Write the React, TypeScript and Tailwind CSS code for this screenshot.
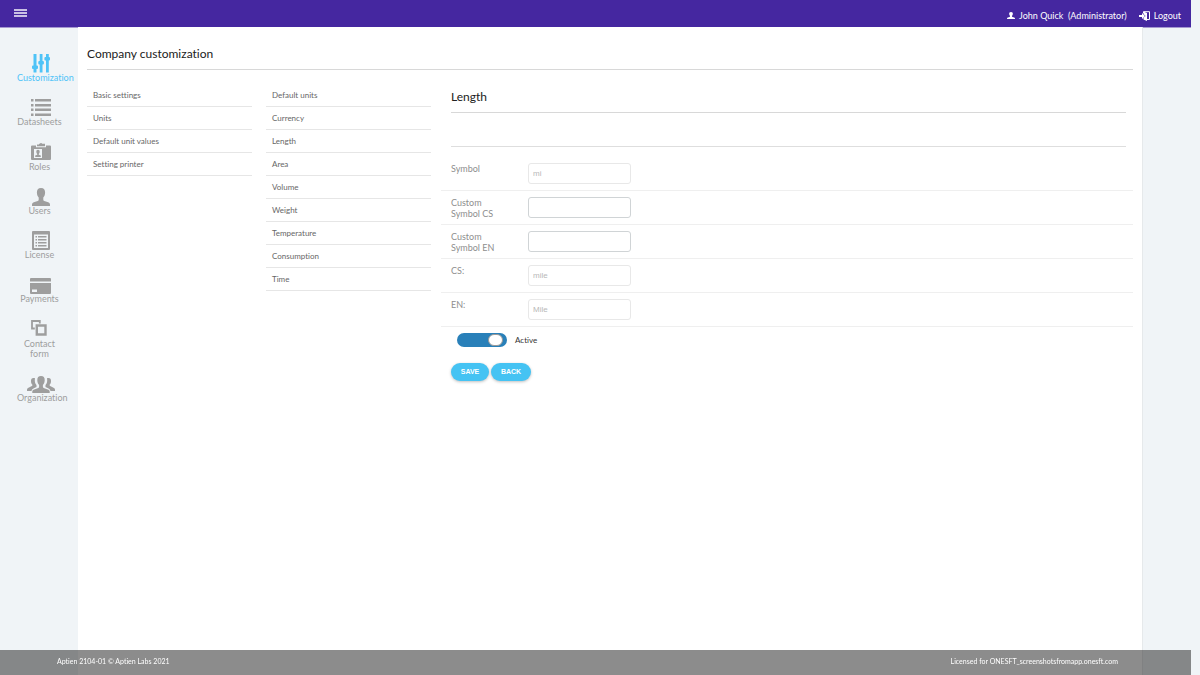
import { FC, ReactNode } from "react";

interface MenuItem {
  label: string;
  icon: ReactNode;
  active?: boolean;
}

interface Field {
  id: string;
  label: string;
  value?: string;
  disabled?: boolean;
}

const UserShape: FC<{ className?: string }> = ({ className }) => (
  <svg className={className} viewBox="0 0 18 18" preserveAspectRatio="none" fill="currentColor">
    <path d="M9 0C6 0 4.900 1.800 4.900 4.500c0 2.200.7 3.900 1.800 4.900v2c0 .8-.3 1.200-1 1.500L1.800 14.200C.5 14.700 0 15.500 0 16.700V18h18v-1.300c0-1.200-.5-2-1.800-2.500l-3.900-1.300c-.7-.3-1-.7-1-1.500v-2c1.100-1 1.800-2.700 1.800-4.900C13.100 1.800 12 0 9 0z" />
  </svg>
);

const menuItems: MenuItem[] = [
  {
    label: "Customization",
    active: true,
    icon: (
      <svg className="ml-[2px] h-[20px] w-[18px]" viewBox="0 0 18 20" fill="currentColor">
        <path d="M1.500 1h3v18.500h-3zM7.700 1h2.800v18.500H7.700zM14 1h2.800v18.500H14z" />
        <path d="M0 13.500q0-1 1-1h4q1 0 1 1v1.600q0 1-1 1H1q-1 0-1-1zM6.300 9q0-1 1-1h3.600q1 0 1 1v1.400q0 1-1 1H7.300q-1 0-1-1zM12.400 5q0-1 1-1H17q1 0 1 1v1.400q0 1-1 1h-3.600q-1 0-1-1z" />
      </svg>
    ),
  },
  {
    label: "Datasheets",
    icon: (
      <svg className="ml-[2px] h-[20px] w-[20px]" viewBox="0 0 20 20" fill="currentColor">
        <path d="M0 2h2.500v2.500H0zM0 7h2.500v2.500H0zM0 11.500h2.500V14H0zM0 16.500h2.500V19H0zM4 2h16v2.500H4zM4 7h16v2.500H4zM4 11.500h16V14H4zM4 16.500h16V19H4z" />
      </svg>
    ),
  },
  {
    label: "Roles",
    icon: (
      <svg className="ml-[2px] h-[20px] w-[20px]" viewBox="0 0 20 20" fill="currentColor">
        <path
          fillRule="evenodd"
          d="M8 2.500V1.800h.8a1.300 1.300 0 0 1 2.400 0H14v2.400H6V2.500zM1 3.500h4v1.700h10V3.500h4a1 1 0 0 1 1 1V17a1 1 0 0 1-1 1H1a1 1 0 0 1-1-1V4.500a1 1 0 0 1 1-1zM3 7v9h8V7z"
        />
        <path d="M7 7.700c-1.300 0-1.700.8-1.700 2 0 1 .4 1.700.9 2.200v.8l-2 .9V15h5.600v-1.400l-2-.9v-.8c.5-.5.9-1.200.9-2.200 0-1.200-.4-2-1.700-2z" />
      </svg>
    ),
  },
  {
    label: "Users",
    icon: <UserShape className="mt-[2px] ml-[2px] h-[18px] w-[18px]" />,
  },
  {
    label: "License",
    icon: (
      <svg className="ml-[2px] h-[20px] w-[18px]" viewBox="0 0 18 20" fill="currentColor">
        <path
          fillRule="evenodd"
          d="M1 1h16a1 1 0 0 1 1 1v17a1 1 0 0 1-1 1H1a1 1 0 0 1-1-1V2a1 1 0 0 1 1-1zM2 4.500V18h14V4.500z"
        />
        <path d="M3.500 6H5v1.500H3.500zM3.500 9H5v1.500H3.500zM3.500 12H5v1.500H3.500zM3.500 15H5v1.500H3.500zM6 6h8.500v1.500H6zM6 9h8.500v1.500H6zM6 12h8.500v1.500H6zM6 15h8.500v1.500H6z" />
      </svg>
    ),
  },
  {
    label: "Payments",
    icon: (
      <svg className="mt-[2px] ml-[2px] h-[20px] w-[21px]" viewBox="0 0 21 20" fill="currentColor">
        <path
          fillRule="evenodd"
          d="M1 3h19a1 1 0 0 1 1 1v2.500H0V4a1 1 0 0 1 1-1zM0 8h21v10a1 1 0 0 1-1 1H1a1 1 0 0 1-1-1zM2 14.500V17h5v-2.500z"
        />
      </svg>
    ),
  },
  {
    label: "Contact form",
    icon: (
      <svg className="mr-[2px] mb-[2px] h-[16px] w-[16px]" viewBox="0 0 16 16" fill="none" stroke="currentColor">
        <path d="M3.800 8.500H1V1h7.800v2.500" strokeWidth="1.800" />
        <path d="M5.800 5.500h8.700v9H5.800z" strokeWidth="2.400" />
      </svg>
    ),
  },
  {
    label: "Organization",
    icon: (
      <svg className="mt-[2px] ml-[2px] h-[20px] w-[28px]" viewBox="0 0 28 20" fill="currentColor">
        <path d="M6.500 4C4.700 4 4 5.200 4 7c0 1.600.5 2.900 1.300 3.600v1.200L1 14c-.7.400-1 .9-1 1.700V17h4.500c.3-1.500 1.200-2.200 2.400-2.700l2.600-1.200V11C8.300 9.800 7.800 8.200 7.800 6.200c0-.7.100-1.300.2-1.900C7.600 4.100 7.100 4 6.500 4zM21.500 4c1.800 0 2.500 1.200 2.500 3 0 1.600-.5 2.900-1.300 3.600v1.200L27 14c.7.400 1 .9 1 1.700V17h-4.500c-.3-1.500-1.200-2.200-2.400-2.700l-2.600-1.200V11c1.200-1.200 1.700-2.800 1.700-4.800 0-.7-.1-1.300-.2-1.900.4-.2.900-.3 1.500-.3z" />
        <path d="M14 2c-2.600 0-3.700 1.600-3.700 4 0 2.200.7 4 1.800 5v1.700c0 .7-.3 1-.8 1.200l-4.700 1.800c-.8.400-1.300 1-1.300 2V19h17.400v-1.300c0-1-.5-1.600-1.300-2l-4.700-1.800c-.5-.2-.8-.5-.8-1.200V11c1.100-1 1.800-2.800 1.800-5 0-2.400-1.100-4-3.700-4z" />
      </svg>
    ),
  },
];

const settings = ["Basic settings", "Units", "Default unit values", "Setting printer"];

const units = [
  "Default units",
  "Currency",
  "Length",
  "Area",
  "Volume",
  "Weight",
  "Temperature",
  "Consumption",
  "Time",
];

const fields: Field[] = [
  { id: "symbol", label: "Symbol", value: "mi", disabled: true },
  { id: "symbol-cs", label: "Custom Symbol CS" },
  { id: "symbol-en", label: "Custom Symbol EN" },
  { id: "name-cs", label: "CS:", value: "mile", disabled: true },
  { id: "name-en", label: "EN:", value: "Mile", disabled: true },
];

const Header = () => (
  <header className="mr-[9px] flex h-[27px] items-center justify-between bg-[#4527a0] pr-[10px] pl-[14px] text-white shadow-[0_1px_0_#a597d0]">
    <button type="button" aria-label="Menu" className="mb-[2px]">
      <svg className="h-[8px] w-[13px]" viewBox="0 0 13 8" shapeRendering="crispEdges">
        <path d="M0 0h13v2H0zM0 3h13v2H0zM0 6h13v2H0z" fill="#c9c0e4" />
      </svg>
    </button>
    <div className="mt-1 flex items-center gap-3 text-[9px] leading-3">
      <a href="#profile" className="flex items-center gap-1">
        <UserShape className="h-[7px] w-[8px]" />
        <span className="whitespace-pre">John Quick  (Administrator)</span>
      </a>
      <a href="#logout" className="flex items-center gap-1">
        <svg className="h-[10px] w-[11px]" viewBox="0 0 11 10">
          <path d="M0 4h3V2l3 3-3 3V6H0z" fill="#fff" />
          <path d="M4.500 2V.7h6v7.800H8" fill="none" stroke="#fff" />
          <path d="M4.500.5L8 2v8L4.500 8.500V6.800L6.600 5 4.500 3z" fill="#fff" />
        </svg>
        Logout
      </a>
    </div>
  </header>
);

const Sidebar = () => (
  <nav className="w-[78px] shrink-0 pt-[26px] pl-[17px]">
    <ul className="flex h-[350px] flex-col justify-between">
      {menuItems.map(({ label, icon, active }) => (
        <li key={label}>
          <a
            href="#"
            className={`block w-[45px] text-center text-[9px] leading-[10px] ${
              active ? "text-[#4fc3f7]" : "text-[#9e9e9e]"
            }`}
          >
            <span className="flex h-[20px] items-center justify-center">{icon}</span>
            {label}
          </a>
        </li>
      ))}
    </ul>
  </nav>
);

const LinkList: FC<{ items: string[] }> = ({ items }) => (
  <ul className="w-[165px] shrink-0">
    {items.map((item) => (
      <li key={item} className="border-b border-[#e6e6e6]">
        <a href="#" className="block px-[6px] py-[6px] text-[8px] leading-[10px] text-[#666]">
          {item}
        </a>
      </li>
    ))}
  </ul>
);

const FormRow: FC<Field> = ({ id, label, value = "", disabled }) => (
  <div className="flex h-[34px] border-b border-[#efefef] pl-[10px]">
    <label htmlFor={id} className="mt-[6px] w-[55px] text-[9px] leading-[11px] text-[#8e8e8e]">
      {label}
    </label>
    <input
      id={id}
      type="text"
      defaultValue={value}
      disabled={disabled}
      className={`mt-[6px] ml-[22px] h-[21px] w-[103px] rounded-[3px] border bg-white px-[4px] font-['Liberation_Sans',sans-serif] text-[8px] ${
        disabled ? "border-[#e8e8e8] text-[#b8b8b8]" : "border-[#d0d4d6] text-[#555]"
      }`}
    />
  </div>
);

const App = () => {
  return (
    <div className="flex min-h-screen flex-col bg-[#f0f4f7] font-['Lato',sans-serif] [font-variant-ligatures:none]">
      <Header />
      <div className="flex flex-1">
        <Sidebar />
        <main className="mr-[57px] flex-1 border-r border-[#e6e9eb] bg-white pr-[9px] pb-[25px] pl-[9px]">
          <h1 className="mt-[19px] border-b border-[#d8d8d8] pb-[8px] text-[12px] leading-[15px] text-[#212121]">
            Company customization
          </h1>
          <div className="mt-[14px] flex">
            <LinkList items={settings} />
            <div className="ml-[14px] flex">
              <LinkList items={units} />
            </div>
            <form className="ml-[10px] flex-1">
              <div className="mr-[7px] ml-[10px]">
                <h2 className="border-b border-[#d8d8d8] pt-[6px] pb-[8px] text-[12px] leading-[14px] text-[#212121]">
                  Length
                </h2>
                <div className="h-[34px] border-b border-[#dedede]" />
              </div>
              <div className="mt-[10px]">
                {fields.map((field) => (
                  <FormRow key={field.id} {...field} />
                ))}
              </div>
              <label className="mt-[6px] ml-[16px] flex w-fit items-center gap-2 text-[8px] leading-[14px] text-[#333]">
                <input type="checkbox" defaultChecked className="peer sr-only" />
                <span className="flex h-[14px] w-[50px] items-center rounded-full bg-[#bdbdbd] px-[4px] peer-checked:justify-end peer-checked:bg-[#2980b9]">
                  <span className="h-[12px] w-[15px] rounded-full border border-[#999] bg-white" />
                </span>
                Active
              </label>
              <div className="mt-4 ml-[10px] flex gap-[2px] font-['Liberation_Sans',sans-serif] text-[7px] font-bold text-white">
                <button
                  type="submit"
                  className="h-[18px] w-[38px] rounded-full bg-[#45c3f3] shadow-[0_1px_3px_rgba(0,0,0,0.25)]"
                >
                  SAVE
                </button>
                <button
                  type="button"
                  className="h-[18px] w-[40px] rounded-full bg-[#45c3f3] shadow-[0_1px_3px_rgba(0,0,0,0.25)]"
                >
                  BACK
                </button>
              </div>
            </form>
          </div>
        </main>
      </div>
      <footer className="fixed right-[9px] bottom-0 left-0 flex h-[25px] items-center justify-between bg-[#1a1a1a]/50 pr-[73px] pb-[3px] pl-[57px] text-[7px] text-white">
        <span>Aptien 2104-01 © Aptien Labs 2021</span>
        <span>Licensed for ONESFT_screenshotsfromapp.onesft.com</span>
      </footer>
    </div>
  );
};

export default App;
